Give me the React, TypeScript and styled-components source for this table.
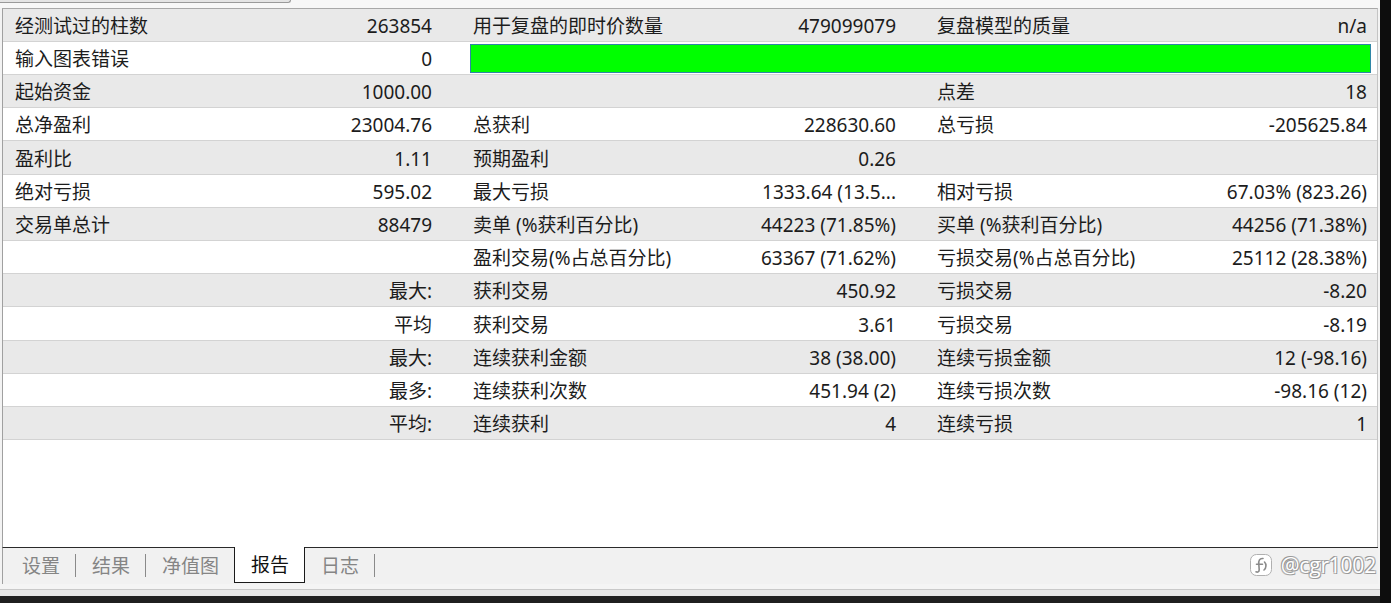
import React from "react";
import styled, { createGlobalStyle } from "styled-components";

const Global = createGlobalStyle`
  html, body { margin: 0; padding: 0; background: #f1f1f1; overflow: hidden; }
  * { box-sizing: border-box; }
`;

const Screen = styled.div`
  width: 1391px;
  height: 603px;
  display: flex;
  font-family: "Noto Sans", "Noto Sans CJK SC", sans-serif;
  font-size: 19px;
  color: #1c1c1c;
`;

const Main = styled.div`
  position: relative;
  flex: 0 0 1380px;
  display: flex;
  flex-direction: column;
  background: #f3f3f3;
`;

const EdgeBar = styled.div`
  flex: 1;
  background: #0d0d0d;
`;

const TopStrip = styled.div`
  height: 8px;
  display: flex;
  align-items: flex-start;
  background: #f7f7f7;
`;

const TopStub = styled.div`
  width: 291px;
  height: 3px;
  background: #e4e4e4;
  border-bottom: 1px solid #9a9a9a;
  border-right: 1px solid #9a9a9a;
  border-bottom-right-radius: 3px;
`;

const Panel = styled.div`
  height: 539px;
  margin: 0 2px 0 2px;
  background: #ffffff;
  border-top: 1px solid #a8a8a8;
  border-left: 1px solid #a0a0a0;
  border-right: 1px solid #c4c4c4;
  display: flex;
  flex-direction: column;
`;

const Row = styled.div<{ $shade: boolean; $tall?: boolean }>`
  height: ${(p) => (p.$tall ? "34px" : "33px")};
  padding-top: 3px;
  display: grid;
  grid-template-columns: 237px 221px 239px 225px 240px 1fr;
  align-items: center;
  background: ${(p) => (p.$shade ? "#e9e9e9" : "#ffffff")};
  border-bottom: 1px solid #d3d3d3;
  white-space: nowrap;
`;

const Label = styled.div`
  padding-left: 12px;
  line-height: 29px;
  overflow: hidden;
`;

const Value = styled.div<{ $last?: boolean }>`
  text-align: right;
  padding-right: ${(p) => (p.$last ? "10px" : "29px")};
  line-height: 29px;
`;

const BarCell = styled.div`
  grid-column: 3 / 7;
  height: 29px;
  margin: -2px 6px 0 9px;
  background: #00ff00;
  border: 1px solid #2f86a6;
`;

const TabBar = styled.div`
  height: 37px;
  margin: 0 2px;
  display: flex;
  align-items: stretch;
  border-top: 1px solid #2a2a2a;
  border-left: 1px solid #a0a0a0;
  padding-left: 3px;
  background: #f1f1f1;
`;

const Tab = styled.div<{ $active?: boolean }>`
  display: flex;
  align-items: center;
  padding: 0 15px 2px 16px;
  margin-top: ${(p) => (p.$active ? "-1px" : "0")};
  height: ${(p) => (p.$active ? "36px" : "auto")};
  color: ${(p) => (p.$active ? "#111" : "#858585")};
  background: ${(p) => (p.$active ? "#ffffff" : "transparent")};
  border: ${(p) => (p.$active ? "1px solid #1a1a1a" : "none")};
  border-top: none;
`;

const Sep = styled.div`
  width: 1px;
  align-self: center;
  height: 23px;
  margin-top: -2px;
  background: #8a8a8a;
`;

const BottomStrip = styled.div`
  flex: 1;
  display: flex;
  flex-direction: column;
`;

const LightBand = styled.div`
  height: 6px;
  background: #f4f4f4;
  border-bottom: 1px solid #c9c9c9;
`;

const MidBand = styled.div`
  height: 6px;
  background: #e6e6e6;
`;

const DarkBand = styled.div`
  flex: 1;
  background: #1f1f1f;
`;

const Watermark = styled.div`
  position: absolute;
  right: 4px;
  top: 551px;
  display: flex;
  align-items: center;
  gap: 8px;
  font-family: "Open Sans", "Noto Sans", sans-serif;
  font-size: 21px;
  color: #ffffff;
  text-shadow: -1px -1px 0 #9a9a9a, 1px 1px 0 #9a9a9a, 1px -1px 0 #b5b5b5, -1px 1px 0 #b5b5b5;
  letter-spacing: -0.2px;
`;

type Cell = string;
const rows: Cell[][] = [
  ["经测试过的柱数", "263854", "用于复盘的即时价数量", "479099079", "复盘模型的质量", "n/a"],
  ["输入图表错误", "0", "BAR", "", "", ""],
  ["起始资金", "1000.00", "", "", "点差", "18"],
  ["总净盈利", "23004.76", "总获利", "228630.60", "总亏损", "-205625.84"],
  ["盈利比", "1.11", "预期盈利", "0.26", "", ""],
  ["绝对亏损", "595.02", "最大亏损", "1333.64 (13.5...", "相对亏损", "67.03% (823.26)"],
  ["交易单总计", "88479", "卖单 (%获利百分比)", "44223 (71.85%)", "买单 (%获利百分比)", "44256 (71.38%)"],
  ["", "", "盈利交易(%占总百分比)", "63367 (71.62%)", "亏损交易(%占总百分比)", "25112 (28.38%)"],
  ["", "最大:", "获利交易", "450.92", "亏损交易", "-8.20"],
  ["", "平均", "获利交易", "3.61", "亏损交易", "-8.19"],
  ["", "最大:", "连续获利金额", "38 (38.00)", "连续亏损金额", "12 (-98.16)"],
  ["", "最多:", "连续获利次数", "451.94 (2)", "连续亏损次数", "-98.16 (12)"],
  ["", "平均:", "连续获利", "4", "连续亏损", "1"],
];

const Logo = () => (
  <svg width="24" height="24" viewBox="0 0 24 24">
    <rect x="1.5" y="1.5" width="21" height="21" rx="6" fill="#ffffff" stroke="#b0b0b0" strokeWidth="1" />
    <path d="M14 5.5 C10.5 5 9.5 8 9.8 11 L10.2 16.5 C10.3 19 8.5 19.5 7 18.8 M7.5 11.2 H13.5 M15.5 9 C17.5 11 17.5 15 15 17"
      fill="none" stroke="#8a8a8a" strokeWidth="1.6" strokeLinecap="round" />
  </svg>
);

export default function App() {
  return (
    <>
      <Global />
      <Screen>
        <Main>
          <TopStrip>
            <TopStub />
          </TopStrip>
          <Panel>
            {rows.map((r, i) => (
              <Row key={i} $shade={i % 2 === 0} $tall={i % 5 === 4}>
                <Label>{r[0]}</Label>
                <Value>{r[1]}</Value>
                {r[2] === "BAR" ? (
                  <BarCell />
                ) : (
                  <>
                    <Label>{r[2]}</Label>
                    <Value>{r[3]}</Value>
                    <Label>{r[4]}</Label>
                    <Value $last>{r[5]}</Value>
                  </>
                )}
              </Row>
            ))}
          </Panel>
          <TabBar>
            <Tab>设置</Tab>
            <Sep />
            <Tab>结果</Tab>
            <Sep />
            <Tab>净值图</Tab>
            <Tab $active>报告</Tab>
            <Tab>日志</Tab>
            <Sep />
          </TabBar>
          <BottomStrip>
            <LightBand />
            <MidBand />
            <DarkBand />
          </BottomStrip>
          <Watermark>
            <Logo />
            <span>@cgr1002</span>
          </Watermark>
        </Main>
        <EdgeBar />
      </Screen>
    </>
  );
}
